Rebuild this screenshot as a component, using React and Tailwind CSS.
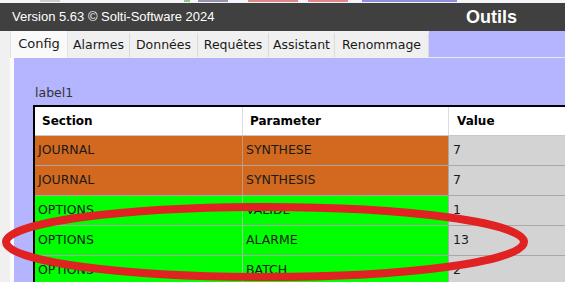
import React from "react";

const tabs = [
  { label: "Config", w: "w-[58px]", active: true },
  { label: "Alarmes", w: "w-[62px]" },
  { label: "Données", w: "w-[68px]" },
  { label: "Requêtes", w: "w-[71px]" },
  { label: "Assistant", w: "w-[66px]" },
  { label: "Renommage", w: "w-[94px]" },
];

const rows = [
  { section: "JOURNAL", param: "SYNTHESE", value: "7", bg: "bg-[#d2691e]", line: "border-[#c09a7c]" },
  { section: "JOURNAL", param: "SYNTHESIS", value: "7", bg: "bg-[#d2691e]", line: "border-[#c09a7c]" },
  { section: "OPTIONS", param: "VALIDE", value: "1", bg: "bg-[#00ff00]", line: "border-[#8fd08f]" },
  { section: "OPTIONS", param: "ALARME", value: "13", bg: "bg-[#00ff00]", line: "border-[#8fd08f]" },
  { section: "OPTIONS", param: "BATCH", value: "2", bg: "bg-[#00ff00]", line: "border-[#8fd08f]" },
];

// bits of the window behind, only the bottom pixels of it show
const scraps = [
  { w: "w-[20px]", c: "bg-[#b0b0b0]", ml: "ml-[40px]" },
  { w: "w-[6px]", c: "bg-[#44aa44]", ml: "ml-[124px]" },
  { w: "w-[30px]", c: "bg-[#55557a]", ml: "ml-[8px]" },
  { w: "w-[50px]", c: "bg-[#d04040]", ml: "ml-[20px]" },
  { w: "w-[40px]", c: "bg-[#d04040]", ml: "ml-[10px]" },
  { w: "w-[95px]", c: "bg-[#4a4ac8]", ml: "ml-[14px]" },
];

const gothic = "font-['DejaVu_Sans',sans-serif]";

export default function App() {
  return (
    <div className="relative w-[565px] h-[282px] overflow-hidden bg-[#f0f0f0]">
      <div className="h-[3px] flex items-start bg-[#f4f4f8]">
        {scraps.map((s, i) => (
          <div key={i} className={`${s.w} ${s.ml} h-[2px] ${s.c} opacity-60`}></div>
        ))}
      </div>

      {/* title bar */}
      <div className="h-[28px] bg-[#404040] flex items-center justify-between pl-[12px] pr-[48px] font-['Liberation_Sans',sans-serif] text-white">
        <span className="text-[13px]">Version 5.63 © Solti-Software 2024</span>
        <span className="text-[18px] font-bold">Outils</span>
      </div>

      {/* tab strip */}
      <div className={`h-[27px] flex items-stretch ${gothic}`}>
        <div className="w-[10px] bg-[#f0f0f0]"></div>
        {tabs.map((t) =>
          t.active ? (
            <div key={t.label} className={`${t.w} bg-[#f9f9f9] border-l border-r border-[#e3e3e3] flex items-center justify-center text-[13px] text-[#1a1a1a] pb-[2px]`}>
              {t.label}
            </div>
          ) : (
            <div key={t.label} className={`${t.w} mt-[2px] mb-[1px] bg-[#f0f0f0] border-r border-[#dadada] flex items-center justify-center text-[12.5px] text-[#1a1a1a]`}>
              {t.label}
            </div>
          )
        )}
        <div className="flex-1 bg-[#b4b4ff] border-b border-[#e8e8f0]"></div>
      </div>

      {/* panel */}
      <div className="flex h-full">
        <div className="w-[10px] bg-[#f0f0f0]"></div>
        <div className="w-[4px] bg-[#fbfbfb]"></div>
        <div className={`flex-1 bg-[#b4b4ff] pl-[19px] pt-[27px] ${gothic}`}>
          <div className="text-[12.5px] text-[#333] leading-[16px] pl-[2px]">label1</div>
          <div className="mt-[4px] border-t-2 border-l-2 border-black">
            <div className="flex h-[29px] bg-white border-b border-[#c8c8c8] text-[12px] font-bold text-black">
              <div className="w-[208px] flex items-center pl-[7px] border-r border-[#dcdcdc]">Section</div>
              <div className="w-[206px] flex items-center pl-[7px] border-r border-[#dcdcdc]">Parameter</div>
              <div className="flex-1 flex items-center pl-[8px]">Value</div>
            </div>
            {rows.map((r, i) => (
              <div key={i} className="flex h-[30px] border-b border-[#a8a8a8] text-[12.5px] text-[#1a1a1a]">
                <div className={`w-[208px] flex items-center pl-[3px] border-r ${r.line} ${r.bg}`}>{r.section}</div>
                <div className={`w-[206px] flex items-center pl-[3px] border-r border-[#a8a8a8] ${r.bg}`}>{r.param}</div>
                <div className="flex-1 flex items-center pl-[4px] bg-[#d3d3d3]">{r.value}</div>
              </div>
            ))}
          </div>
        </div>
      </div>

      {/* red annotation circle */}
      <svg className="absolute inset-0 pointer-events-none" width="565" height="282" viewBox="0 0 565 282">
        <ellipse cx="265" cy="242" rx="259" ry="35" fill="none" stroke="#e02222" strokeWidth="8" />
      </svg>
    </div>
  );
}
